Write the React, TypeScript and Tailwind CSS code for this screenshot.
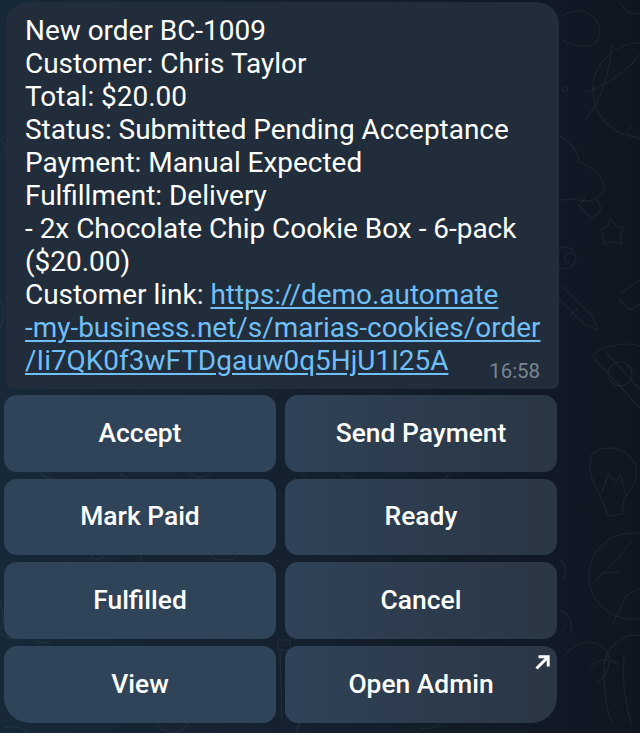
import React, { FC } from 'react';

interface IActionProps {
  label: string;
  className: string;
  external?: boolean;
}

const ActionButton: FC<IActionProps> = (props) => {
  return (
    <div
      className={`relative flex items-center justify-center rounded-[13px] text-[26.4px] font-medium text-white ${props.className}`}
    >
      {props.label}
      {props.external && (
        <svg className="absolute top-[8px] right-[7px] w-[16px] h-[16px]" viewBox="0 0 16 16" fill="none">
          <path d="M2.5 14.5 13 4M4.5 2.8h9.7v9.7" stroke="white" strokeWidth="3" />
        </svg>
      )}
    </div>
  );
};

const Doodles: FC = () => {
  return (
    <svg
      className="absolute inset-0 w-full h-full"
      viewBox="0 0 640 733"
      fill="none"
      stroke="#ffffff"
      strokeOpacity="0.055"
      strokeWidth="1.2"
    >
      {/* top right: cookie, ball */}
      <path d="M562 16c10-6 24-8 32 2 8 8 8 20 0 26-10 4-22 2-32-4" />
      <path d="M620 2c4 10 14 14 24 10" />
      <circle cx="640" cy="90" r="47" />
      <path d="M612 44c-4 40-14 58-26 76M586 92c20-6 40-20 54-38" />
      <circle cx="565" cy="89" r="2.5" />
      <path d="M632 124l-6 8 14 8" />
      {/* mushroom */}
      <path d="M560 136c12 8 20 16 18 26 12 4 22 12 26 22 2 12-14 20-26 16-6-2-12 0-18 0" />
      <path d="M586 198l-8 8 14 12 10-8-6-12" />
      {/* star, spiral */}
      <path d="M610 218l6 8 8 2-4 8 2 8-10-2-8 2 0-8-4-6 8-4z" />
      <path d="M574 252c-6-10-22-4-20 8 2 12 20 12 22-2 0-4-6-8-10-4s0 10 4 8" />
      {/* pen, box */}
      <path d="M562 286l30 30 6 14-14-6-30-30M578 308l-8 8" />
      <path d="M620 294l20-14M618 298l12 12 10-6" />
      {/* pizza slice */}
      <path d="M594 354c14-10 34-12 46-8M592 356l48 52M606 352l34 38" />
      <circle cx="620" cy="374" r="12" />
      {/* light bulb */}
      <path d="M592 454c12-12 40-6 44 14 2 16-8 22-12 32l-2 14-14 2-6-16c-6-12-16-26-10-46z" />
      <path d="M602 492l6-18 8 8 4-8 6 22" />
      {/* umbrella */}
      <circle cx="632" cy="576" r="43" />
      <path d="M632 540c-10 14-24 30-36 40M640 588l-14 8-14 30M598 574l22-2" />
      {/* palm */}
      <path d="M606 660c2-16 20-28 36-24M564 656c12-16 32-18 42-6 8 12 0 26-8 32M590 668c4-6 16-12 28-4" />
      <path d="M606 654c-4 20-2 48 6 70M624 656c-2 20 0 46 8 70" />
      {/* left gutter */}
      <path d="M0 140c4 2 6 8 4 14M0 300c6 10 4 24-2 30" />
      {/* bits between buttons */}
      <path d="M40 473c4 4 8 5 12 5M120 474l6 4M190 473c6 6 14 6 20 0M300 470l6 8M340 474c6 4 10 4 14 2M450 474l-6 5" />
      <path d="M36 640c6 4 10 4 14 0M90 556c4 4 10 4 14 0M140 556l2 5M210 556c10 6 20 4 28 0" />
      <path d="M278 640h12v10h-12zM280 650l2 72M276 560l4 2" />
      <path d="M0 634c6 4 14 6 22 2M0 600c4 14 4 24 0 30" />
      <path d="M156 722c4 8 12 10 18 10s12-4 14-10M300 722l-4 10M440 724c-8 4-12 6-20 4M4 728c8-2 14-2 24 4" />
      <path d="M560 560c6 4 8 14 2 20M560 610c10 4 14 14 10 24M566 626l-4 6" />
    </svg>
  );
};

const LEFT = 'bg-gradient-to-r from-[#2f4359] to-[#2f4359]';
const RIGHT = 'bg-gradient-to-r from-[#2f4257] to-[#2a3644]';
const LINK = 'text-[#70bff7] underline underline-offset-[3px]';

const App: FC = () => {
  return (
    <div
      className="relative h-[733px] w-[640px] overflow-hidden bg-gradient-to-r from-[#172838] via-[#14202e] to-[#0e1621]"
      style={{ fontFamily: 'Roboto, sans-serif' }}
    >
      <Doodles />
      <div className="relative flex flex-col pl-[4px] pt-[2px] w-[557px]">
        <div className="relative ml-[2px] w-[553px] h-[387px] bg-[#212d3a] rounded-t-[22px] rounded-b-[7px] pl-[19px] pt-[12px] text-[27.95px] leading-[33px] text-white">
          <div>New order BC-1009</div>
          <div>Customer: Chris Taylor</div>
          <div>Total: $20.00</div>
          <div>Status: Submitted Pending Acceptance</div>
          <div>Payment: Manual Expected</div>
          <div>Fulfillment: Delivery</div>
          <div>- 2x Chocolate Chip Cookie Box - 6-pack</div>
          <div>($20.00)</div>
          <div>
            Customer link: <span className={LINK}>https://demo.automate</span>
          </div>
          <div className={LINK}>-my-business.net/s/marias-cookies/order</div>
          <div className={LINK}>/Ii7QK0f3wFTDgauw0q5HjU1I25A</div>
          <div className="absolute right-[19px] bottom-[6px] text-[20.4px] leading-[24px] text-[#7a8691]">16:58</div>
        </div>
        <div className="grid grid-cols-[272px_272px] grid-rows-[77px_76px_77px_77px] gap-x-[9px] gap-y-[7px] mt-[6px]">
          <ActionButton label="Accept" className={LEFT} />
          <ActionButton label="Send Payment" className={RIGHT} />
          <ActionButton label="Mark Paid" className={LEFT} />
          <ActionButton label="Ready" className={RIGHT} />
          <ActionButton label="Fulfilled" className={LEFT} />
          <ActionButton label="Cancel" className={RIGHT} />
          <ActionButton label="View" className={`${LEFT} rounded-bl-[26px]`} />
          <ActionButton label="Open Admin" className={`${RIGHT} rounded-br-[26px]`} external />
        </div>
      </div>
    </div>
  );
};

export default App;
